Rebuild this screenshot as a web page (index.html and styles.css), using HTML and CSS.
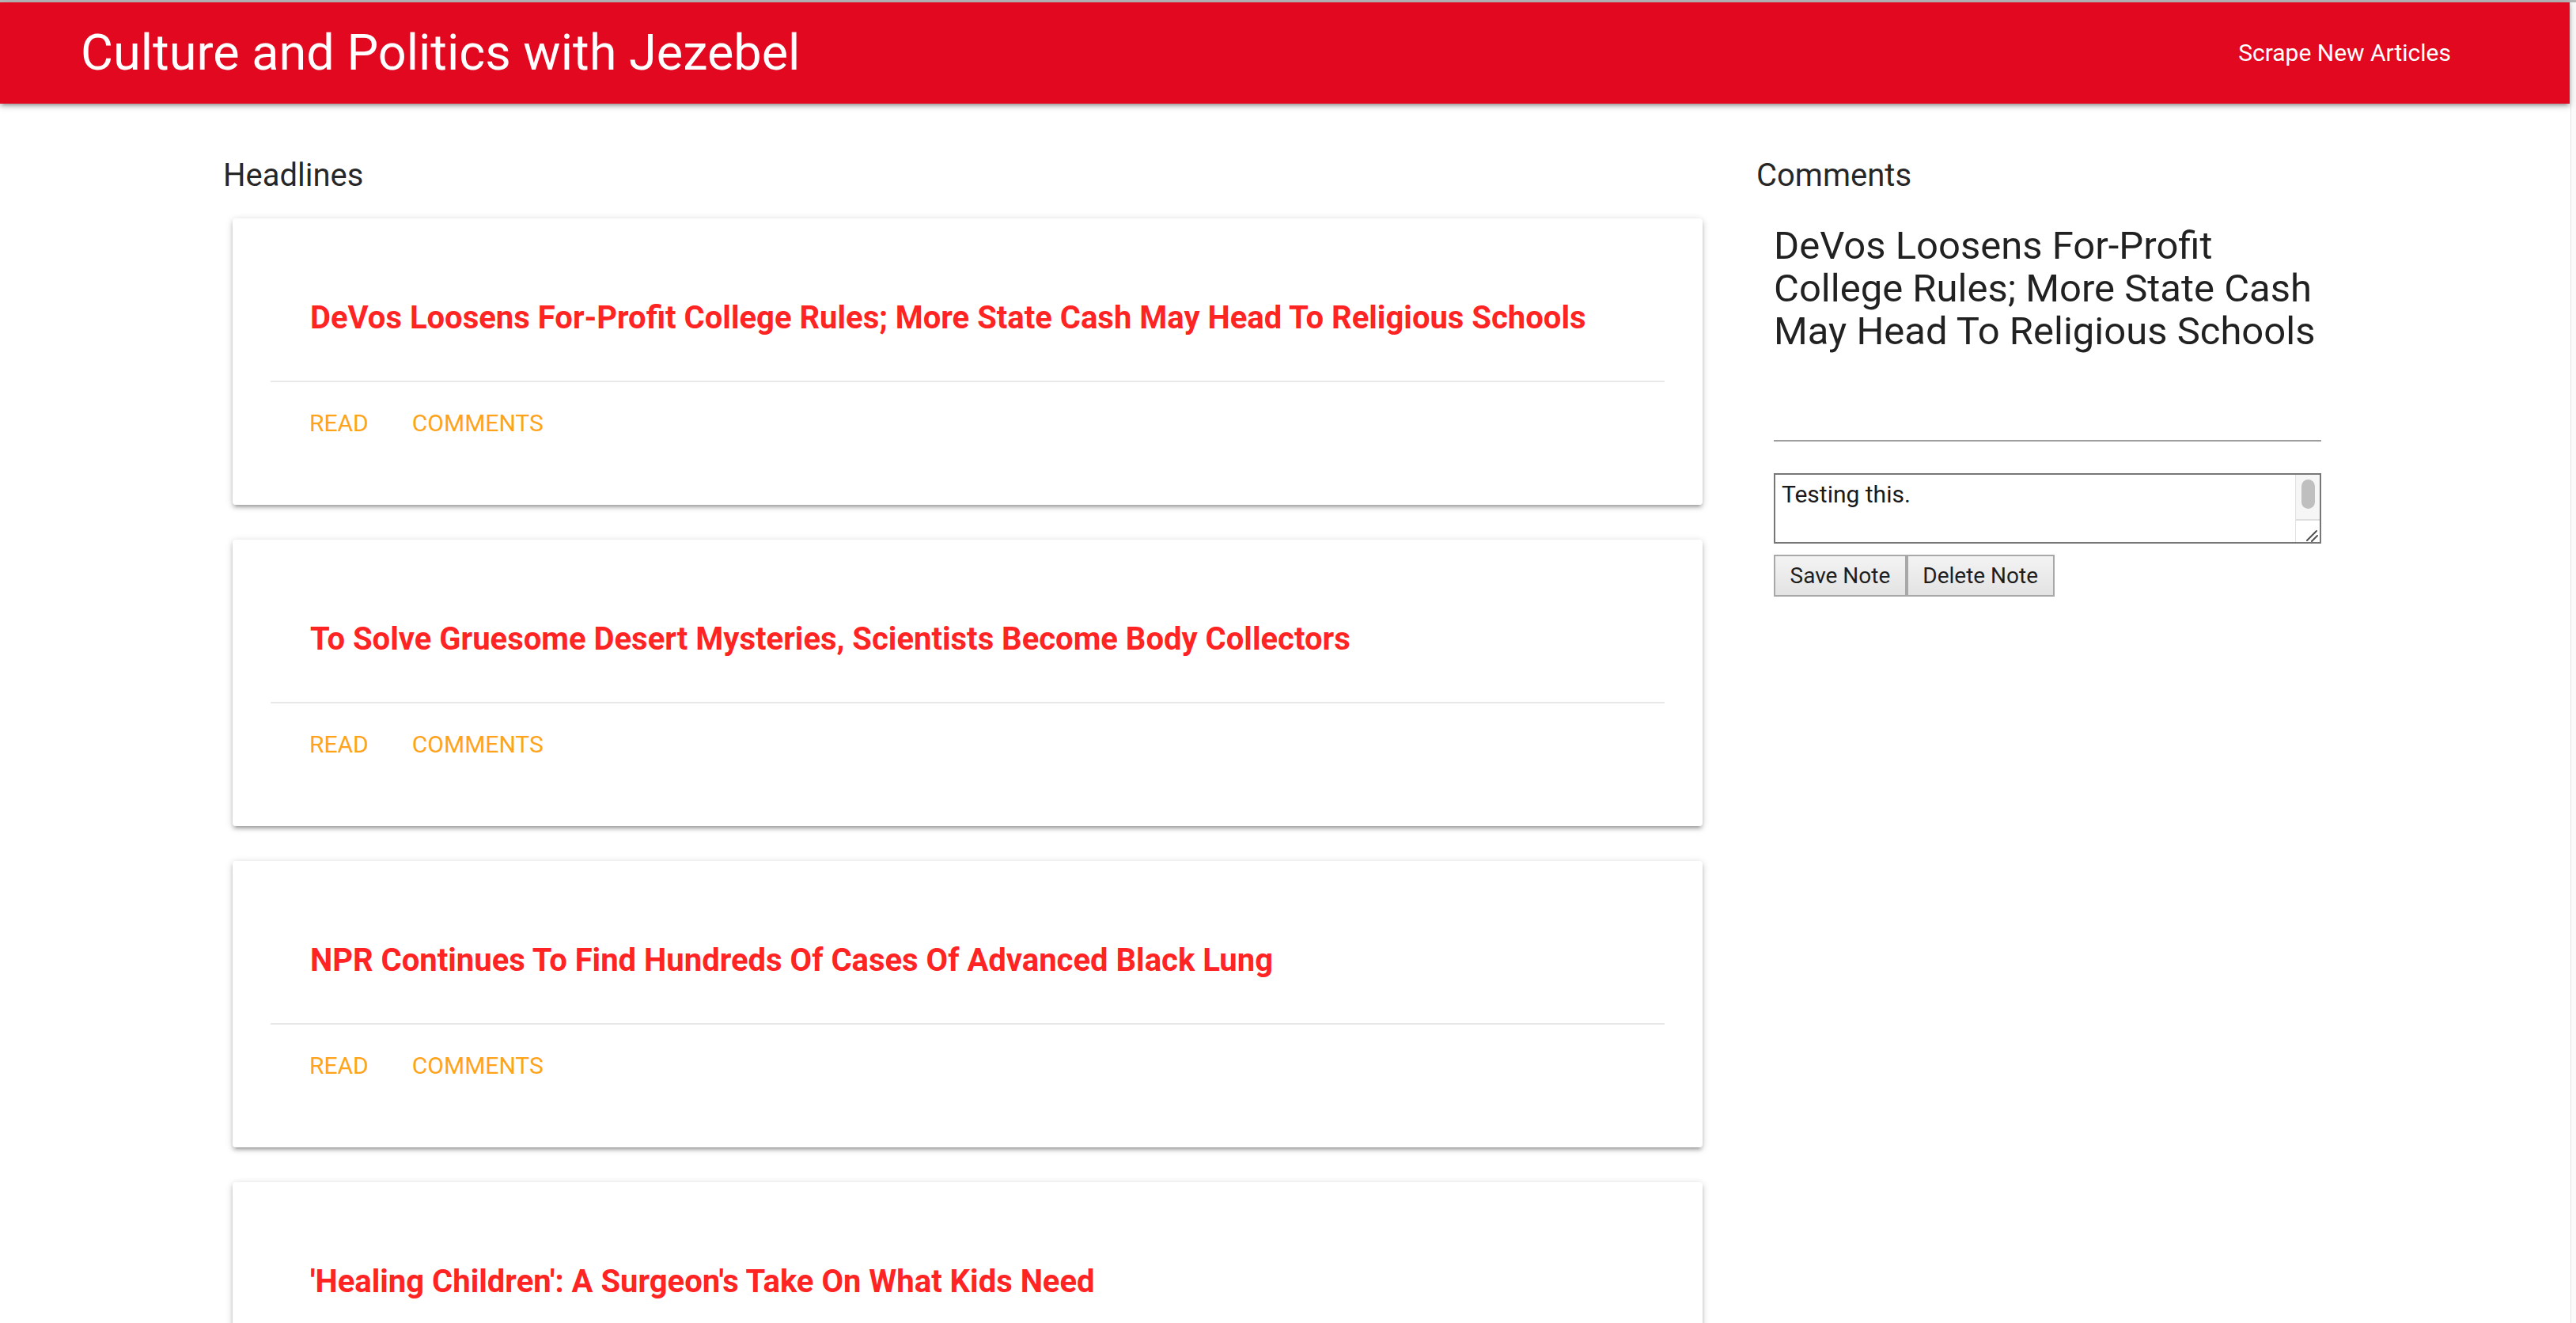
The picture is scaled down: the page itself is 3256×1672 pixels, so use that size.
FILE: index.html
```html
<!DOCTYPE html>
<html lang="en">
<head>
<meta charset="utf-8">
<title>Culture and Politics with Jezebel</title>
<link rel="stylesheet" href="styles.css">
</head>
<body>
<div class="chrome-top"></div>
<div class="frame">
  <div class="page">
    <nav class="navbar">
      <a class="brand" href="#">Culture and Politics with Jezebel</a>
      <ul class="nav-links">
        <li><a href="#">Scrape New Articles</a></li>
      </ul>
    </nav>
    <main class="content">
      <section class="headlines">
        <h2 class="section-title">Headlines</h2>
        <div class="cards">
          <article class="card">
            <div class="card-content"><h3 class="card-title">DeVos Loosens For-Profit College Rules; More State Cash May Head To Religious Schools</h3></div>
            <div class="card-action"><a href="#">Read</a><a href="#">Comments</a></div>
          </article>
          <article class="card">
            <div class="card-content"><h3 class="card-title">To Solve Gruesome Desert Mysteries, Scientists Become Body Collectors</h3></div>
            <div class="card-action"><a href="#">Read</a><a href="#">Comments</a></div>
          </article>
          <article class="card">
            <div class="card-content"><h3 class="card-title">NPR Continues To Find Hundreds Of Cases Of Advanced Black Lung</h3></div>
            <div class="card-action"><a href="#">Read</a><a href="#">Comments</a></div>
          </article>
          <article class="card">
            <div class="card-content"><h3 class="card-title">'Healing Children': A Surgeon's Take On What Kids Need</h3></div>
            <div class="card-action"><a href="#">Read</a><a href="#">Comments</a></div>
          </article>
        </div>
      </section>
      <aside class="comments">
        <h2 class="section-title">Comments</h2>
        <div class="note-panel">
          <h3 class="note-title">DeVos Loosens For-Profit College Rules; More State Cash May Head To Religious Schools</h3>
          <hr class="note-rule">
          <div class="note-field">
            <textarea class="note-input">Testing this.</textarea>
            <div class="note-scroll" aria-hidden="true">
              <div class="note-scroll-track"><div class="note-scroll-thumb"></div></div>
              <div class="note-resizer">
                <svg width="30" height="27" viewBox="0 0 30 27"><path d="M14 25 L26 13 M20 26 L27 19" stroke="#505050" stroke-width="2" stroke-linecap="round" fill="none"/></svg>
              </div>
            </div>
          </div>
          <div class="note-buttons">
            <button class="note-btn">Save Note</button>
            <button class="note-btn">Delete Note</button>
          </div>
        </div>
      </aside>
    </main>
  </div>
  <div class="scrolltrack"></div>
</div>
</body>
</html>
```

FILE: styles.css
```css
html, body {
  margin: 0;
  padding: 0;
  height: 100%;
  overflow: hidden;
  background: #ffffff;
}

body {
  font-family: Roboto, "Noto Sans", sans-serif;
  color: rgba(0, 0, 0, 0.87);
  display: flex;
  flex-direction: column;
}

.chrome-top {
  height: 3px;
  background: #b9b9b9;
  flex: none;
}

.frame {
  flex: 1;
  display: flex;
  min-height: 0;
}

.page {
  flex: 1;
  min-width: 0;
  margin-right: 1px;
}

.scrolltrack {
  width: 6px;
  flex: none;
  background: #fafafa;
  border-left: 1px solid #e4e4e4;
}

/* Navbar */
.navbar {
  position: relative;
  z-index: 2;
  height: 128px;
  background: #e1081f;
  display: flex;
  align-items: center;
  justify-content: space-between;
  padding: 0 150px 0 102px;
  box-shadow: 0 4px 4px 0 rgba(0, 0, 0, 0.14), 0 6px 2px -4px rgba(0, 0, 0, 0.12), 0 2px 10px 0 rgba(0, 0, 0, 0.2);
}

.brand {
  color: #ffffff;
  text-decoration: none;
  font-size: 63px;
  line-height: 128px;
  font-weight: 400;
}

.nav-links {
  list-style: none;
  margin: 0;
  padding: 0;
  display: flex;
}

.nav-links a {
  color: #ffffff;
  text-decoration: none;
  font-size: 30px;
  line-height: 128px;
}

/* Content */
.content {
  display: flex;
  align-items: flex-start;
  padding: 67px 0 0 282px;
}

.section-title {
  margin: 0;
  font-size: 40px;
  line-height: 48px;
  font-weight: 400;
  color: rgba(0, 0, 0, 0.87);
}

.headlines {
  width: 1870px;
  flex: none;
}

.cards {
  margin-top: 30px;
  padding-left: 12px;
}

.card {
  background: #ffffff;
  border-radius: 4px;
  margin-bottom: 44px;
  padding: 0 48px;
  box-shadow: 0 4px 4px 0 rgba(0, 0, 0, 0.14), 0 6px 2px -4px rgba(0, 0, 0, 0.12), 0 2px 10px 0 rgba(0, 0, 0, 0.2);
}

.card-content {
  padding: 102px 0 55px 50px;
}

.card-title {
  margin: 0;
  font-size: 40px;
  line-height: 48px;
  font-weight: 700;
  color: #ff2424;
}

.card-action {
  border-top: 2px solid #e8e8e8;
  padding: 30px 0 81px 49px;
  display: flex;
  gap: 55px;
}

.card-action a {
  color: #ffa31a;
  text-decoration: none;
  text-transform: uppercase;
  font-size: 30px;
  line-height: 44px;
}

/* Comments column */
.comments {
  margin-left: 68px;
  width: 714px;
  flex: none;
}

.note-panel {
  padding-left: 22px;
  width: 692px;
}

.note-title {
  margin: 38px 0 0;
  font-size: 49px;
  line-height: 54px;
  font-weight: 400;
  color: rgba(0, 0, 0, 0.87);
}

.note-rule {
  margin: 110px 0 0;
  border: none;
  height: 2px;
  background: #9e9e9e;
}

.note-field {
  position: relative;
  width: 692px;
  margin-top: 40px;
}

.note-input {
  display: block;
  box-sizing: border-box;
  width: 692px;
  height: 89px;
  margin: 0;
  padding: 7px 40px 7px 8px;
  border: 2px solid #767676;
  border-radius: 0;
  font-family: Roboto, "Noto Sans", sans-serif;
  font-size: 30px;
  color: #1a1a1a;
  overflow: hidden;
  resize: none;
  background: #ffffff;
}

.note-scroll {
  position: absolute;
  top: 2px;
  right: 2px;
  bottom: 2px;
  width: 30px;
  border-left: 1px solid #e2e2e2;
  display: flex;
  flex-direction: column;
}

.note-scroll-track {
  flex: 1;
  background: #f6f6f6;
  border-bottom: 2px solid #dedede;
  display: flex;
  justify-content: center;
  align-items: flex-start;
}

.note-scroll-thumb {
  margin-top: 6px;
  width: 17px;
  height: 37px;
  border-radius: 9px;
  background: #bfbfbf;
}

.note-resizer {
  height: 27px;
  background: #ffffff;
  flex: none;
}

.note-resizer svg {
  display: block;
}

.note-buttons {
  display: flex;
  margin-top: 14px;
}

.note-btn {
  font-family: Roboto, "Noto Sans", sans-serif;
  font-size: 28px;
  line-height: 49px;
  padding: 0 18.5px;
  margin: 0;
  color: #1e1e1e;
  border: 2px solid #a8a8a8;
  border-radius: 0;
  background: linear-gradient(#f3f3f3, #e3e3e3);
}
```
